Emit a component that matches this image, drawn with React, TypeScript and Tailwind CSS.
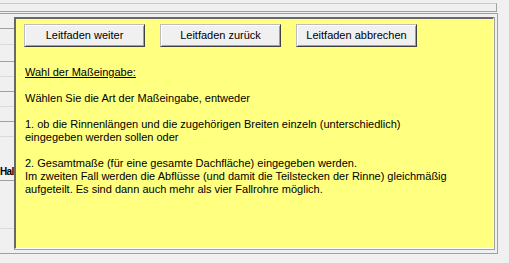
import React from 'react';

const BUTTONS = ['Leitfaden weiter', 'Leitfaden zurück', 'Leitfaden abbrechen'];

function ClassicButton({ label }: { label: string }) {
  return (
    <button
      type="button"
      className="w-[121px] h-[23px] bg-[#f0f0f0] border border-t-[#bdbdbd] border-l-[#bdbdbd] border-r-[#404040] border-b-[#404040] shadow-[inset_1px_1px_0_#ffffff,inset_-1px_-1px_0_#a0a0a0] text-[11px] leading-none text-black flex items-center justify-center"
    >
      {label}
    </button>
  );
}

export default function App() {
  return (
    <div
      className="w-[509px] h-[263px] bg-[#f0f0f0] overflow-hidden"
      style={{ fontFamily: '"Liberation Sans", Arial, sans-serif' }}
    >
      {/* top strip */}
      <div className="h-[3px]" />
      <div className="w-[497px] h-[9px] border-t border-b border-r border-t-[#c8c8c8] border-b-[#a0a0a0] border-r-[#a0a0a0]" />
      <div className="h-[1px]" />

      {/* frame */}
      <div className="w-[498px] h-[241px] border-t border-r border-b border-[#a0a0a0] flex">
        {/* table rows behind the panel */}
        <div className="w-[14px] flex flex-col shrink-0">
          <div className="h-[15px] border-b border-[#a0a0a0]" />
          <div className="h-[16px] border-b border-[#dadada]" />
          <div className="h-[17px] border-b border-[#a0a0a0]" />
          <div className="h-[15px] border-b border-[#dadada]" />
          <div className="h-[15px] border-b border-[#a0a0a0]" />
          <div className="h-[15px] border-b border-[#dadada]" />
          <div className="h-[15px] border-b border-[#a0a0a0]" />
          <div className="h-[15px] border-b border-[#dadada]" />
          <div className="h-[44px] border-b border-[#a0a0a0] flex items-end pb-[2px]">
            <span className="text-[10px] font-bold leading-[13px] tracking-[-0.6px] whitespace-nowrap text-black">Hal</span>
          </div>
          <div className="h-[48px] border-b border-[#dadada]" />
        </div>

        {/* yellow guide panel */}
        <div className="mt-[3px] w-[481px] h-[233px] border border-[#a0a0a0] border-t-0 border-l-0">
          <div className="w-full h-full bg-[#ffff80] border-2 border-t-[#696969] border-l-[#696969] border-r-white border-b-white border-r-[1px] border-b-[1px] pl-[8px] pt-[5px]">
            <div className="flex gap-[15px]">
              {BUTTONS.map((b) => (
                <ClassicButton key={b} label={b} />
              ))}
            </div>
            <div className="mt-[19px] ml-[1px] text-[11px] leading-[13px] text-black whitespace-nowrap">
              <p className="underline">Wahl der Maßeingabe:</p>
              <p>&nbsp;</p>
              <p>Wählen Sie die Art der Maßeingabe, entweder</p>
              <p>&nbsp;</p>
              <p>1. ob die Rinnenlängen und die zugehörigen Breiten einzeln (unterschiedlich)</p>
              <p>eingegeben werden sollen oder</p>
              <p>&nbsp;</p>
              <p>2. Gesamtmaße (für eine gesamte Dachfläche) eingegeben werden.</p>
              <p>Im zweiten Fall werden die Abflüsse (und damit die Teilstecken der Rinne) gleichmäßig</p>
              <p>aufgeteilt. Es sind dann auch mehr als vier Fallrohre möglich.</p>
            </div>
          </div>
        </div>
      </div>
    </div>
  );
}
